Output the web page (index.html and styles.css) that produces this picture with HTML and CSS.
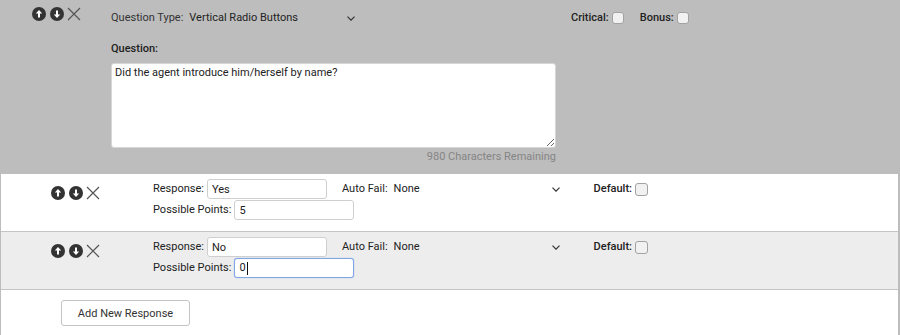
FILE: index.html
```html
<!DOCTYPE html>
<html>
<head>
<meta charset="utf-8">
<link rel="stylesheet" href="styles.css">
</head>
<body>
<div class="panel">
  <section class="question">
    <div class="ctrls">
      <svg class="ico" viewBox="0 0 14 14"><circle cx="7" cy="7" r="7" fill="#333"/><path d="M7 3 L3.8 6.6 H6 V10.6 H8 V6.6 H10.2 Z" fill="#fff"/></svg>
      <svg class="ico" viewBox="0 0 14 14"><circle cx="7" cy="7" r="7" fill="#333"/><path d="M7 11 L3.8 7.4 H6 V3.4 H8 V7.4 H10.2 Z" fill="#fff"/></svg>
      <svg class="ico" viewBox="0 0 14 14"><path d="M1 1 L13 13 M13 1 L1 13" stroke="#555" stroke-width="1.2" fill="none"/></svg>
    </div>
    <div class="qmain">
      <div class="qtype">
        <span>Question Type:</span>
        <div class="select"><span class="val">Vertical Radio Buttons</span><svg class="chev" viewBox="0 0 8 5"><path d="M0.5 0.7 L4 4.2 L7.5 0.7" stroke="#333" stroke-width="1.2" fill="none"/></svg></div>
      </div>
      <div class="qlabel">Question:</div>
      <textarea class="qtext">Did the agent introduce him/herself by name?</textarea>
      <div class="remaining">980 Characters Remaining</div>
    </div>
    <div class="flags">
      <label class="flag">Critical:<input type="checkbox" class="cb"></label>
      <label class="flag">Bonus:<input type="checkbox" class="cb"></label>
    </div>
  </section>

  <section class="resp">
    <div class="rctrls">
      <svg class="ico" viewBox="0 0 14 14"><circle cx="7" cy="7" r="7" fill="#333"/><path d="M7 3 L3.8 6.6 H6 V10.6 H8 V6.6 H10.2 Z" fill="#fff"/></svg>
      <svg class="ico" viewBox="0 0 14 14"><circle cx="7" cy="7" r="7" fill="#333"/><path d="M7 11 L3.8 7.4 H6 V3.4 H8 V7.4 H10.2 Z" fill="#fff"/></svg>
      <svg class="ico" viewBox="0 0 14 14"><path d="M1 1 L13 13 M13 1 L1 13" stroke="#555" stroke-width="1.2" fill="none"/></svg>
    </div>
    <div class="rfields">
      <div class="line">
        <span class="rl">Response:</span><input class="txt" type="text" value="Yes">
        <span class="af">Auto Fail:</span>
        <div class="select"><span class="val">None</span><svg class="chev" viewBox="0 0 8 5"><path d="M0.5 0.7 L4 4.2 L7.5 0.7" stroke="#333" stroke-width="1.2" fill="none"/></svg></div>
        <label class="flag def">Default:<input type="checkbox" class="cb"></label>
      </div>
      <div class="line">
        <span class="rl">Possible Points:</span><input class="txt" type="text" value="5">
      </div>
    </div>
  </section>

  <section class="resp alt">
    <div class="rctrls">
      <svg class="ico" viewBox="0 0 14 14"><circle cx="7" cy="7" r="7" fill="#333"/><path d="M7 3 L3.8 6.6 H6 V10.6 H8 V6.6 H10.2 Z" fill="#fff"/></svg>
      <svg class="ico" viewBox="0 0 14 14"><circle cx="7" cy="7" r="7" fill="#333"/><path d="M7 11 L3.8 7.4 H6 V3.4 H8 V7.4 H10.2 Z" fill="#fff"/></svg>
      <svg class="ico" viewBox="0 0 14 14"><path d="M1 1 L13 13 M13 1 L1 13" stroke="#555" stroke-width="1.2" fill="none"/></svg>
    </div>
    <div class="rfields">
      <div class="line">
        <span class="rl">Response:</span><input class="txt" type="text" value="No">
        <span class="af">Auto Fail:</span>
        <div class="select"><span class="val">None</span><svg class="chev" viewBox="0 0 8 5"><path d="M0.5 0.7 L4 4.2 L7.5 0.7" stroke="#333" stroke-width="1.2" fill="none"/></svg></div>
        <label class="flag def">Default:<input type="checkbox" class="cb"></label>
      </div>
      <div class="line">
        <span class="rl">Possible Points:</span><div class="txt focus">0<span class="caret"></span></div>
      </div>
    </div>
  </section>

  <div class="add"><button class="btn">Add New Response</button></div>
</div>
</body>
</html>
```

FILE: styles.css
```css
body {
  margin: 0;
  font-family: Roboto, "Liberation Sans", sans-serif;
  font-size: 11px;
  line-height: 14px;
  color: #333;
  background: #fff;
}
.panel {
  width: 900px;
  height: 335px;
  box-sizing: border-box;
  border-left: 1px solid #bdbdbd;
  border-right: 2px solid #bdbdbd;
}
.question {
  display: flex;
  height: 174px;
  box-sizing: border-box;
  background: #bdbdbd;
}
.ctrls {
  width: 110px;
  box-sizing: border-box;
  padding-left: 31px;
  padding-top: 7px;
  display: flex;
  align-items: flex-start;
  gap: 3.5px;
}
.ico { width: 14px; height: 14px; display: block; }
.qmain {
  width: 445px;
  padding-top: 8px;
}
.qtype {
  display: flex;
  align-items: center;
  height: 20px;
  color: #333;
}
.select {
  display: flex;
  align-items: center;
  justify-content: space-between;
  width: 166px;
  height: 20px;
  padding: 0 10px 0 6px;
  color: #222;
}
.chev { width: 8px; height: 5px; display: block; }
.qlabel {
  margin-top: 14px;
  font-weight: 500;
  line-height: 14px;
  color: #222;
}
.qtext {
  display: block;
  margin-top: 7px;
  width: 445px;
  height: 85px;
  box-sizing: border-box;
  border: 1px solid #d6d6d6;
  border-radius: 3px;
  padding: 2px 3px;
  font-family: Roboto, "Liberation Sans", sans-serif;
  font-size: 11px;
  line-height: 14px;
  color: #222;
  background: #fff;
}
.remaining {
  margin-top: 2px;
  text-align: right;
  color: #858585;
  line-height: 14px;
}
.flags {
  margin-left: 15px;
  padding-top: 8px;
  display: flex;
  align-items: flex-start;
  gap: 16px;
}
.flag {
  display: flex;
  align-items: center;
  height: 20px;
  font-weight: 500;
  color: #222;
}
.cb {
  appearance: none;
  -webkit-appearance: none;
  width: 12px;
  height: 12px;
  margin: 0 0 0 3px;
  border: 1px solid #a2a2a2;
  border-radius: 3px;
  background: #f1f1f1;
  box-sizing: border-box;
}
.resp {
  display: flex;
  height: 58px;
  box-sizing: border-box;
  border-bottom: 1px solid #c4c4c4;
  padding-top: 5px;
  background: #fff;
}
.resp.alt { background: #ededed; }
.rctrls {
  width: 152px;
  box-sizing: border-box;
  padding-left: 50px;
  padding-top: 7px;
  display: flex;
  align-items: flex-start;
  gap: 3.5px;
}
.rfields {
  display: flex;
  flex-direction: column;
  gap: 1px;
}
.line {
  display: flex;
  align-items: center;
  height: 20px;
}
.rl { margin-right: 3px; color: #222; }
.txt {
  width: 120px;
  height: 20px;
  box-sizing: border-box;
  border: 1px solid #cfcfcf;
  border-radius: 3px;
  padding: 0 4px;
  font-family: Roboto, "Liberation Sans", sans-serif;
  font-size: 11px;
  color: #222;
  background: #fff;
  outline: none;
}
div.txt {
  display: flex;
  align-items: center;
}
.txt.focus {
  border-color: #7da6e3;
  box-shadow: 0 0 1px 0 #7da6e3;
}
.caret {
  display: inline-block;
  width: 1px;
  height: 13px;
  background: #111;
  margin-left: 1px;
}
.af { margin-left: 15px; color: #222; }
.def { margin-left: 24px; }
.def .cb { width: 13px; height: 13px; }
.add {
  padding-top: 10px;
  padding-left: 60px;
}
.btn {
  width: 129px;
  height: 26px;
  background: #fff;
  border: 1px solid #c4c4c4;
  border-radius: 3px;
  font-family: Roboto, "Liberation Sans", sans-serif;
  font-size: 11px;
  color: #333;
  padding: 0;
}
```
